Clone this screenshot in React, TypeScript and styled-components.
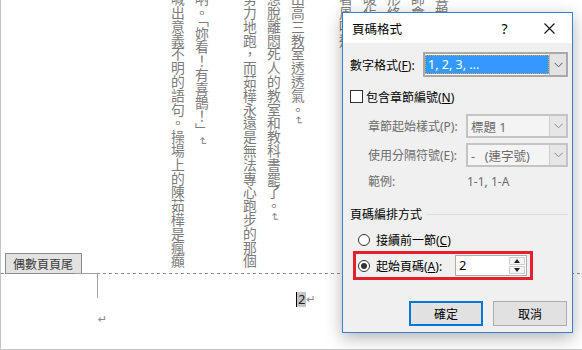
import styled, { createGlobalStyle } from 'styled-components';

const GlobalStyle = createGlobalStyle`
    html,
    body {
        margin: 0;
        padding: 0;
    }

    body {
        width: 582px;
        height: 350px;
        overflow: hidden;
        background: #e6e6e6;
        font-family: "Noto Sans", "Noto Sans CJK TC", sans-serif;
    }
`;

const Page = styled.div`
    position: relative;
    width: 582px;
    height: 350px;
    box-sizing: border-box;
    overflow: hidden;
    background: #fff;
    border-left: 1px solid #c4c4c4;
    border-bottom: 1px solid #c4c4c4;
`;

const BodyZone = styled.div`
    display: flex;
    height: 273px;
    padding-left: 165px;
    overflow: hidden;
`;

const Column = styled.div`
    flex: none;
    width: 24px;
    height: 300px;
    margin-top: -8px;
    writing-mode: vertical-rl;
    font-family: "Noto Sans CJK TC", sans-serif;
    font-size: 13.8px;
    line-height: 24px;
    color: #7c7c7c;
    white-space: nowrap;
`;

const Mark = styled.span`
    color: #8a8a8a;
    font-family: "DejaVu Sans", sans-serif;
    font-size: 11px;
`;

const FooterZone = styled.div`
    position: relative;
    height: 76px;
    padding-top: 18px;
    box-sizing: border-box;
    background: repeating-linear-gradient(to right, #8c8c8c 0 3px, transparent 3px 6px)
        top left / 100% 1px no-repeat;
    font-family: "Noto Sans", "Noto Sans CJK TC", sans-serif;
`;

const FooterTab = styled.div`
    position: absolute;
    left: 4px;
    top: -20px;
    width: 77px;
    height: 21px;
    box-sizing: border-box;
    padding-left: 7px;
    border: 1px solid #8a8a8a;
    background: #e2e2e2;
    font-family: "Noto Sans CJK TC", sans-serif;
    font-size: 12px;
    line-height: 19px;
    color: #3a3a3a;
`;

const MarginCorner = styled.div`
    position: absolute;
    left: 73px;
    top: 0;
    width: 24px;
    height: 25px;
    box-sizing: border-box;
    border-top: 1px solid #a0a0a0;
    border-right: 1px solid #a0a0a0;
`;

const FooterLine = styled.div<{ $indent: number }>`
    display: flex;
    align-items: center;
    height: 16px;
    padding-left: ${({ $indent }) => $indent}px;
    font-size: 13px;
`;

const PageField = styled.span`
    display: inline-block;
    height: 15px;
    padding: 0 1px;
    line-height: 15px;
    background: #c6c6c6;
    border-left: 1px solid #000;
    color: #222;
`;

const Dialog = styled.div`
    position: absolute;
    left: 341px;
    top: 12px;
    display: flex;
    flex-direction: column;
    width: 231px;
    height: 321px;
    box-sizing: border-box;
    border: 1px solid #2f82d4;
    background: #f0f0f0;
    box-shadow: 0 5px 16px rgba(0, 0, 0, 0.3);
    font-family: "Noto Sans", "Noto Sans CJK TC", sans-serif;
    font-size: 12px;
    color: #000;
`;

const TitleBar = styled.div`
    display: flex;
    align-items: center;
    height: 30px;
    background: #fff;
`;

const Title = styled.div`
    flex: 1;
    padding-left: 9px;
    font-size: 12.5px;
`;

const CaptionButton = styled.div`
    display: flex;
    align-items: center;
    justify-content: center;
    width: 45px;
    height: 30px;
    font-size: 14px;
`;

const Content = styled.div`
    display: flex;
    flex: 1;
    flex-direction: column;
    padding: 9px 4px 0 7px;
`;

const FieldRow = styled.div<{ $indent?: number; $top?: number; $field: number }>`
    display: grid;
    grid-template-columns: 1fr ${({ $field }) => $field}px;
    align-items: center;
    margin-top: ${({ $top }) => $top ?? 0}px;
    padding-left: ${({ $indent }) => $indent ?? 0}px;
`;

const Label = styled.span<{ $disabled?: boolean }>`
    color: ${({ $disabled }) => ($disabled ? '#6d6d6d' : '#000')};
    white-space: nowrap;

    u {
        text-decoration: underline;
        text-underline-offset: 1px;
    }
`;

const Select = styled.div<{ $disabled?: boolean; $height: number }>`
    display: flex;
    height: ${({ $height }) => $height}px;
    box-sizing: border-box;
    border: ${({ $disabled }) => ($disabled ? '2px solid #c4c4c4' : '2px solid #a9a9a9')};
    background: ${({ $disabled }) => ($disabled ? '#f4f4f4' : '#fff')};
    color: ${({ $disabled }) => ($disabled ? '#6d6d6d' : '#000')};
`;

const SelectValue = styled.div<{ $selected?: boolean }>`
    display: flex;
    flex: 1;
    align-items: center;
    margin: ${({ $selected }) => ($selected ? '1px 0 1px 0' : '0')};
    padding-left: ${({ $selected }) => ($selected ? '3px' : '3px')};
    background: ${({ $selected }) => ($selected ? '#3399ff' : 'transparent')};
    outline: ${({ $selected }) => ($selected ? '1px dotted #e8a04c' : 'none')};
    outline-offset: -1px;
    color: ${({ $selected }) => ($selected ? '#fff' : 'inherit')};
    font-size: 12.5px;
    white-space: pre;
`;

const SelectArrow = styled.div<{ $disabled?: boolean }>`
    display: flex;
    align-items: center;
    justify-content: center;
    width: 16px;
    border-left: 1px solid ${({ $disabled }) => ($disabled ? '#cfcfcf' : '#bdbdbd')};
    background: ${({ $disabled }) => ($disabled ? '#e6e6e6' : '#e3e3e3')};
`;

const CheckRow = styled.label`
    display: flex;
    align-items: center;
    gap: 3px;
    margin-top: 13px;
    height: 13px;
`;

const Checkbox = styled.span`
    width: 13px;
    height: 13px;
    box-sizing: border-box;
    border: 1px solid #333;
    background: #fff;
`;

const ExampleValue = styled.span`
    padding-left: 1px;
    color: #6d6d6d;
`;

const GroupHeader = styled.div`
    display: flex;
    align-items: center;
    gap: 5px;
    height: 16px;
    margin-top: 16px;

    &::after {
        content: '';
        flex: 1;
        height: 1px;
        background: #dcdcdc;
    }
`;

const RadioRow = styled.div<{ $top?: number; $indent?: number }>`
    display: flex;
    align-items: center;
    gap: 6px;
    height: 16px;
    margin-top: ${({ $top }) => $top ?? 0}px;
    padding-left: ${({ $indent }) => $indent ?? 0}px;
`;

const Radio = styled.span<{ $checked?: boolean }>`
    position: relative;
    width: 12px;
    height: 12px;
    box-sizing: border-box;
    border: 1px solid #333;
    border-radius: 50%;
    background: #fff;

    &::after {
        content: '';
        display: ${({ $checked }) => ($checked ? 'block' : 'none')};
        position: absolute;
        left: 2px;
        top: 2px;
        width: 6px;
        height: 6px;
        border-radius: 50%;
        background: #333;
    }
`;

const Highlight = styled.div`
    display: flex;
    align-items: center;
    width: 180px;
    height: 29px;
    box-sizing: border-box;
    margin: 3px 0 0 3px;
    padding: 0 3px 0 2px;
    border: 3px solid #e5202e;
`;

const SpinBox = styled.div`
    display: flex;
    width: 72px;
    height: 21px;
    margin-left: auto;
    box-sizing: border-box;
    border: 1px solid #adadad;
    background: #fff;
`;

const SpinValue = styled.div`
    flex: 1;
    padding-left: 3px;
    font-size: 13px;
    line-height: 19px;
`;

const SpinButtons = styled.div`
    display: flex;
    flex-direction: column;
    width: 16px;
    margin: 1px;
    gap: 1px;
`;

const SpinButton = styled.div<{ $down?: boolean }>`
    display: flex;
    flex: 1;
    align-items: center;
    justify-content: center;
    box-sizing: border-box;
    border: 1px solid #cfcfcf;
    background: #f4f4f4;

    &::before {
        content: '';
        width: 0;
        height: 0;
        border-left: 3.5px solid transparent;
        border-right: 3.5px solid transparent;
        ${({ $down }) => ($down ? 'border-top: 4px solid #222;' : 'border-bottom: 4px solid #222;')}
    }
`;

const ButtonRow = styled.div`
    display: flex;
    justify-content: flex-end;
    gap: 10px;
    margin-top: 21px;
    padding-right: 1px;
`;

const Button = styled.div<{ $primary?: boolean }>`
    display: flex;
    align-items: center;
    justify-content: center;
    width: 74px;
    height: 25px;
    box-sizing: border-box;
    border: ${({ $primary }) => ($primary ? '2px solid #0078d7' : '1px solid #adadad')};
    background: #e1e1e1;
`;

const Chevron: React.FC<{ color: string }> = ({ color }) => (
    <svg width="9" height="6" viewBox="0 0 9 6">
        <path d="M0.5 0.8 L4.5 4.8 L8.5 0.8" fill="none" stroke={color} strokeWidth="1" />
    </svg>
);

const CloseIcon = () => (
    <svg width="11" height="11" viewBox="0 0 11 11">
        <path d="M0.5 0.5 L10.5 10.5 M10.5 0.5 L0.5 10.5" stroke="#111" strokeWidth="1.1" />
    </svg>
);

const columns: { text: string; mark?: boolean }[] = [
    { text: '喊出意義不明的語句。操場上的陳茹樺是瘋癲' },
    { text: '吶。「妳看！有喜鵲！」', mark: true },
    { text: '' },
    { text: '努力地跑，而茹樺永遠是無法專心跑步的那個' },
    { text: '想脫離悶死人的教室和教科書罷了。', mark: true },
    { text: '出高三教室透透氣。', mark: true },
    { text: '' },
    { text: '著風吹過' },
    { text: '暖化成春' },
    { text: '形終於走' },
    { text: '師會不會' },
    { text: '喜鵲飛來' },
];

const App = () => (
    <>
        <GlobalStyle />
        <Page>
            <BodyZone>
                {columns.map((col, i) => (
                    <Column key={i}>
                        {col.text}
                        {col.mark && <Mark>↵</Mark>}
                    </Column>
                ))}
            </BodyZone>
            <FooterZone>
                <FooterTab>偶數頁頁尾</FooterTab>
                <MarginCorner />
                <FooterLine $indent={295}>
                    <PageField>2</PageField>
                    <Mark>↵</Mark>
                </FooterLine>
                <FooterLine $indent={97} style={{ marginTop: 4 }}>
                    <Mark>↵</Mark>
                </FooterLine>
            </FooterZone>

            <Dialog>
                <TitleBar>
                    <Title>頁碼格式</Title>
                    <CaptionButton>?</CaptionButton>
                    <CaptionButton>
                        <CloseIcon />
                    </CaptionButton>
                </TitleBar>
                <Content>
                    <FieldRow $field={145}>
                        <Label>
                            數字格式(<u>F</u>):
                        </Label>
                        <Select $height={25}>
                            <SelectValue $selected>1, 2, 3, ...</SelectValue>
                            <SelectArrow>
                                <Chevron color="#555" />
                            </SelectArrow>
                        </Select>
                    </FieldRow>

                    <CheckRow>
                        <Checkbox />
                        <Label>
                            包含章節編號(<u>N</u>)
                        </Label>
                    </CheckRow>

                    <FieldRow $field={102} $indent={18} $top={11}>
                        <Label $disabled>章節起始樣式(P):</Label>
                        <Select $disabled $height={24}>
                            <SelectValue>標題 1</SelectValue>
                            <SelectArrow $disabled>
                                <Chevron color="#8a8a8a" />
                            </SelectArrow>
                        </Select>
                    </FieldRow>

                    <FieldRow $field={102} $indent={18} $top={5}>
                        <Label $disabled>使用分隔符號(E):</Label>
                        <Select $disabled $height={24}>
                            <SelectValue>{'-   (連字號)'}</SelectValue>
                            <SelectArrow $disabled>
                                <Chevron color="#8a8a8a" />
                            </SelectArrow>
                        </Select>
                    </FieldRow>

                    <FieldRow $field={102} $indent={18} $top={5}>
                        <Label $disabled>範例:</Label>
                        <ExampleValue>1-1, 1-A</ExampleValue>
                    </FieldRow>

                    <GroupHeader>頁碼編排方式</GroupHeader>

                    <RadioRow $top={10} $indent={8}>
                        <Radio />
                        <Label>
                            接續前一節(<u>C</u>)
                        </Label>
                    </RadioRow>

                    <Highlight>
                        <RadioRow>
                            <Radio $checked />
                            <Label>
                                起始頁碼(<u>A</u>):
                            </Label>
                        </RadioRow>
                        <SpinBox>
                            <SpinValue>2</SpinValue>
                            <SpinButtons>
                                <SpinButton />
                                <SpinButton $down />
                            </SpinButtons>
                        </SpinBox>
                    </Highlight>

                    <ButtonRow>
                        <Button $primary>確定</Button>
                        <Button>取消</Button>
                    </ButtonRow>
                </Content>
            </Dialog>
        </Page>
    </>
);

export default App;
